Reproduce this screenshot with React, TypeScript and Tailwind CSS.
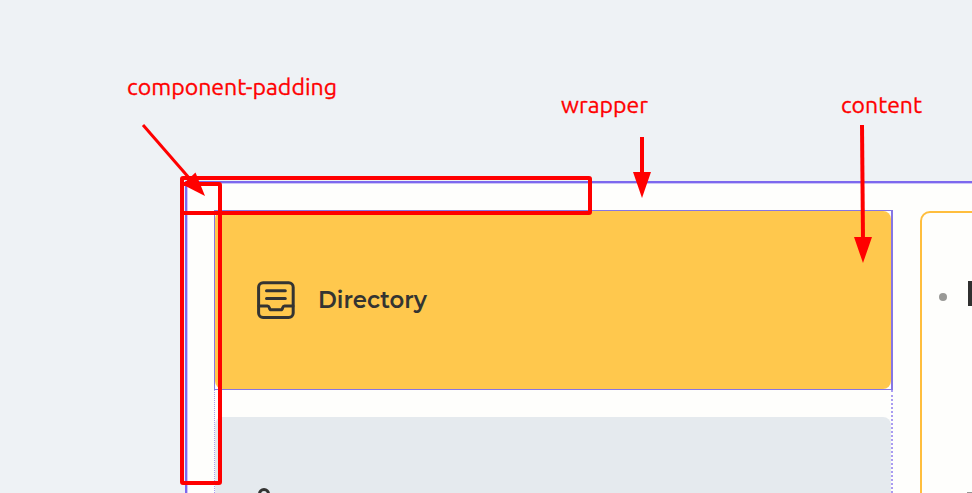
import React from "react";

function DirectoryIcon() {
  return (
    <svg
      className="h-[38px] w-[38px] shrink-0"
      viewBox="0 0 38 38"
      fill="none"
      stroke="#343432"
      strokeWidth="3"
      strokeLinecap="round"
      strokeLinejoin="round"
    >
      <rect x="1.6" y="1.8" width="34.6" height="34.6" rx="4.5" />
      <path d="M9.5 9.7H28.3M9.5 17.4H28.3" />
      <path d="M2 25H10.5Q11.8 25 12.3 26.6Q12.8 28.8 14 28.8H24Q25.2 28.8 25.7 26.6Q26.2 25 27.5 25H36" />
    </svg>
  );
}

function Label({ text, width, className }: { text: string; width: number; className: string }) {
  return (
    <svg className={`absolute h-9 overflow-visible ${className}`} width={width} height="36">
      <text
        x="0"
        y="25"
        textLength={width}
        lengthAdjust="spacingAndGlyphs"
        fill="#ff0000"
        stroke="#ff0000"
        strokeWidth="0.3"
        className="font-[family-name:Ubuntu,system-ui,'Noto_Sans',sans-serif] text-[22px]"
      >
        {text}
      </text>
    </svg>
  );
}

function Annotations() {
  return (
    <div className="pointer-events-none absolute inset-0">
      <div className="absolute left-[180px] top-[176px] h-[39px] w-[412px] rounded-[3px] border-4 border-[#ff0000]" />
      <div className="absolute left-[180px] top-[182px] h-[303px] w-[42px] rounded-[3px] border-4 border-[#ff0000]" />
      <svg className="absolute inset-0" width="972" height="493" fill="#ff0000" stroke="none">
        <path d="M143 125L190 179" stroke="#ff0000" strokeWidth="3" />
        <path d="M205 196L182.5 184.5L195.500 172.5Z" />
        <path d="M642 137V176" stroke="#ff0000" strokeWidth="4" />
        <path d="M633 172H651L642 198Z" />
        <path d="M862 125L863 240" stroke="#ff0000" strokeWidth="4" />
        <path d="M854 237H872L863 263Z" />
      </svg>
      <Label text="component-padding" width={210} className="left-[127px] top-[70px]" />
      <Label text="wrapper" width={87} className="left-[561px] top-[88px]" />
      <Label text="content" width={81} className="left-[841px] top-[88px]" />
    </div>
  );
}

export default function App() {
  return (
    <main className="relative flex h-[493px] w-[972px] overflow-hidden bg-[#eef2f5] pl-[185px] pt-[181px]">
      <section className="flex min-w-[787px] gap-[27px] border-l-2 border-t-2 border-[#7c68ee] bg-[#fefefc] pl-[27px] pt-[27px] shadow-[inset_1px_1px_0_#cdc5f8]">
        <div className="flex w-[679px] shrink-0 flex-col">
          <div className="h-[180px] shrink-0 border border-r-2 border-[#8676e4] bg-[#fefefc]">
            <div className="flex h-full items-center rounded-lg bg-[#ffc84d] pl-[42px]">
              <DirectoryIcon />
              <svg className="ml-[23px] h-9 overflow-visible" width="109" height="36">
                <text
                  x="0"
                  y="26"
                  textLength="109"
                  lengthAdjust="spacingAndGlyphs"
                  fill="#343432"
                  className="font-[family-name:Montserrat,Inter,sans-serif] text-[23px] font-semibold"
                >
                  Directory
                </text>
              </svg>
            </div>
          </div>
          <div className="flex-1 border-l border-r-2 border-dotted border-[#a99cf1] pt-[27px]">
            <div className="flex h-[76px] items-end rounded-t-lg bg-[#e5eaee] pl-[43px]">
              <svg className="h-1.5 w-3" viewBox="0 0 12 6" fill="none" stroke="#343432" strokeWidth="3">
                <circle cx="6" cy="7" r="4.500" />
              </svg>
            </div>
          </div>
        </div>
        <aside className="mt-px h-[320px] w-[300px] shrink-0 rounded-tl-[10px] border-2 border-[#ffbe3d] pl-[17px] pt-[68px]">
          <div className="flex items-center">
            <span className="mt-1.5 h-[8px] w-[8px] rounded-full bg-[#999996]" />
            <span className="ml-[21px] h-[25px] w-1 bg-[#303030]" />
          </div>
          <div className="ml-[28px] mt-[186px] h-4 w-8 bg-[#969694]" />
        </aside>
      </section>
      <Annotations />
    </main>
  );
}
